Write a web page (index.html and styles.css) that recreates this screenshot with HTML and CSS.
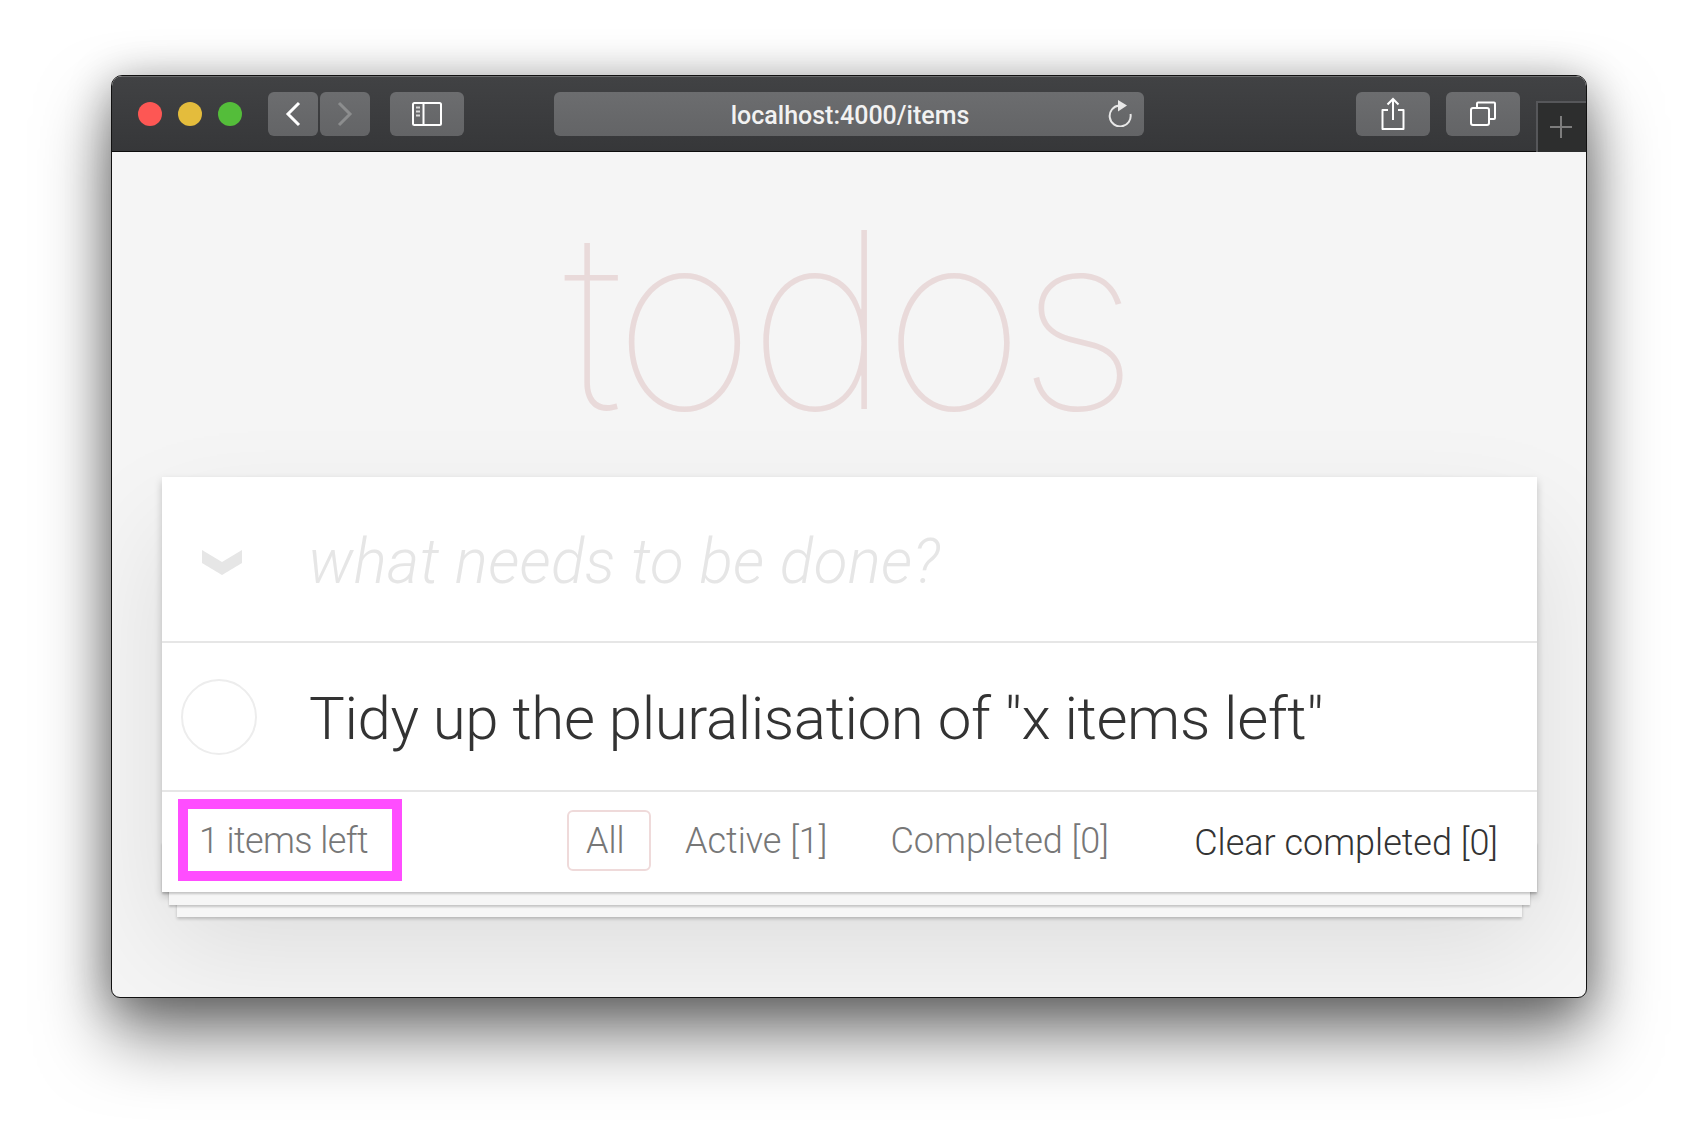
FILE: index.html
```html
<!DOCTYPE html>
<html lang="en">
<head>
<meta charset="utf-8">
<title>todos</title>
<link rel="stylesheet" href="styles.css">
</head>
<body>
<div class="window">
  <header class="toolbar">
    <div class="lights"><span class="light red"></span><span class="light yellow"></span><span class="light green"></span></div>
    <div class="nav">
      <button class="btn nav-btn"><svg width="16" height="26" viewBox="0 0 16 26"><path d="M14 2 3 13l11 11" fill="none" stroke="#fff" stroke-width="3"/></svg></button>
      <button class="btn nav-btn"><svg width="16" height="26" viewBox="0 0 16 26"><path d="M2 2l11 11L2 24" fill="none" stroke="#8c8d8e" stroke-width="3"/></svg></button>
    </div>
    <button class="btn side-btn"><svg width="32" height="26" viewBox="0 0 32 26"><rect x="2" y="2" width="28" height="22" rx="1.500" fill="none" stroke="#fff" stroke-width="2"/><path d="M12.500 2v22" stroke="#fff" stroke-width="2"/><path d="M5 6.500h4M5 10.500h4M5 14.500h4" stroke="#d8d8d8" stroke-width="2"/></svg></button>
    <div class="url">
      <span class="url-text">localhost:4000/items</span>
      <svg class="reload" width="26" height="28" viewBox="0 0 26 28"><path d="M11 6.500A10.500 10.500 0 1 0 22.500 15" fill="none" stroke="#e8e8e8" stroke-width="2"/><path d="M10 1v11.500L19 6.500z" fill="#e8e8e8"/></svg>
    </div>
    <button class="btn act-btn share"><svg width="26" height="34" viewBox="0 0 26 34"><path d="M8 13H2.500v19h21V13H18" fill="none" stroke="#fff" stroke-width="2" stroke-linejoin="round"/><path d="M13 23V2M7.500 7.500 13 2l5.500 5.500" fill="none" stroke="#fff" stroke-width="2"/></svg></button>
    <button class="btn act-btn tabs"><svg width="28" height="26" viewBox="0 0 28 26"><rect x="2" y="7" width="18" height="17" rx="2" fill="none" stroke="#fff" stroke-width="2"/><path d="M8 7V2.500a1 1 0 0 1 1-1h16a1 1 0 0 1 1 1V17a1 1 0 0 1-1 1h-5" fill="none" stroke="#fff" stroke-width="2"/></svg></button>
    <div class="newtab"><svg class="plus" width="22" height="22" viewBox="0 0 22 22"><path d="M11 0v22M0 11h22" stroke="#7d7d7d" stroke-width="2"/></svg></div>
  </header>
  <main class="content">
    <h1 class="title">todos</h1>
    <section class="card">
      <div class="row new-row">
        <svg class="toggle-all" width="40" height="25" viewBox="0 0 40 25"><path d="M0 0 20 12 40 0v13L20 25 0 13z" fill="#e6e6e6"/></svg>
        <span class="placeholder">what needs to be done?</span>
      </div>
      <div class="row item-row">
        <span class="check"></span>
        <span class="item-text">Tidy up the pluralisation of "x items left"</span>
      </div>
      <footer class="footer">
        <span class="count">1 items left</span>
        <nav class="filters">
          <a class="filter selected">All</a>
          <a class="filter active">Active [1]</a>
          <a class="filter completed">Completed [0]</a>
        </nav>
        <span class="clear">Clear completed [0]</span>
      </footer>
    </section>
  </main>
</div>
</body>
</html>
```
FILE: styles.css
```css
* { box-sizing: border-box; }
html, body { margin: 0; height: 100%; background: #fff; overflow: hidden; }
body { padding: 75px 111px 148px; font-family: Roboto, "Liberation Sans", sans-serif; }
.window {
  height: 923px;
  display: flex;
  flex-direction: column;
  border: 1px solid #111;
  border-radius: 11px 11px 9px 9px;
  background: #f5f5f5;
  overflow: hidden;
  box-shadow: 0 38px 70px rgba(0,0,0,.5), 0 6px 44px rgba(0,0,0,.32);
}
.toolbar {
  height: 76px;
  flex: none;
  display: flex;
  align-items: flex-start;
  padding: 15px 0 0 26px;
  background: linear-gradient(#414244, #363739);
  border-top: 1px solid #6b6c6d;
  border-bottom: 1px solid #0c0c0c;
}
.lights { display: flex; gap: 16px; margin-top: 10px; }
.light { width: 24px; height: 24px; border-radius: 50%; }
.red { background: #fd5754; }
.yellow { background: #e4bc3c; }
.green { background: #54bd3a; }
.btn {
  padding: 0;
  border: 0;
  height: 44px;
  border-radius: 6px;
  background: linear-gradient(#6c6d6f, #636466);
  display: flex;
  align-items: center;
  justify-content: center;
}
.nav { display: flex; gap: 2px; margin-left: 26px; }
.nav-btn { width: 50px; }
.side-btn { width: 74px; margin-left: 20px; }
.url {
  position: relative;
  width: 590px;
  height: 44px;
  margin-left: 90px;
  border-radius: 6px;
  background: linear-gradient(#6c6d6f, #636466);
  display: flex;
  align-items: center;
  justify-content: center;
}
.url-text { color: #f2f2f2; font-size: 25px; font-weight: 500; margin-left: 2px; margin-top: 2px; }
.reload { position: absolute; right: 10px; top: 7px; }
.act-btn { width: 74px; }
.share { margin-left: 212px; }
.tabs { margin-left: 16px; }
.newtab {
  width: 50px;
  height: 51px;
  margin: 9px 0 0 16px;
  background: #2d2e2e;
  border-left: 2px solid #56575a;
  border-top: 2px solid #56575a;
  display: flex;
  align-items: center;
  justify-content: center;
}
.plus { margin-right: 2px; margin-bottom: 2px; }
.content { flex: 1; padding: 0 49px 0 50px; }
.title {
  margin: 0;
  height: 325px;
  padding-right: 5px;
  text-align: center;
  font-size: 246px;
  line-height: 336px;
  font-weight: 130;
  color: #e9dada;
  letter-spacing: -8px;
  font-family: Inter, sans-serif;
}
.card {
  position: relative;
  isolation: isolate;
  background: #fff;
  box-shadow: 0 4px 8px rgba(0,0,0,.2), 0 54px 108px rgba(0,0,0,.1);
}
.row { display: flex; align-items: center; border-bottom: 2px solid #e6e6e6; }
.new-row { height: 166px; }
.item-row { height: 149px; }
.toggle-all { margin-left: 40px; margin-top: 6px; }
.placeholder {
  margin-left: 66px;
  margin-top: 4px;
  font-size: 62px;
  letter-spacing: .35px;
  font-weight: 300;
  font-style: italic;
  color: #e6e6e6;
}
.check {
  width: 76px;
  height: 76px;
  margin-left: 19px;
  border: 2px solid #ededed;
  border-radius: 50%;
}
.item-text {
  margin-left: 52px;
  margin-top: 4px;
  font-size: 60px;
  letter-spacing: -.4px;
  font-weight: 300;
  color: #333;
}
.footer {
  position: relative;
  height: 100px;
  display: flex;
  align-items: center;
  font-size: 36px;
  font-weight: 300;
  color: #777;
}
.footer::before {
  content: "";
  position: absolute;
  left: 0; right: 0; bottom: 0; height: 50px;
  z-index: -1;
  box-shadow: 0 2px 2px rgba(0,0,0,.2), 0 20px 0 -7px #f6f6f6, 0 22px 2px -7px rgba(0,0,0,.2), 0 40px 0 -15px #f6f6f6, 0 42px 3px -15px rgba(0,0,0,.2);
}
.count {
  width: 224px;
  height: 82px;
  margin: -4px 0 0 16px;
  padding: 2px 0 0 11px;
  border: 10px solid #ff4dff;
  display: flex;
  align-items: center;
  letter-spacing: -.6px;
}
.filters { display: flex; margin-left: 165px; margin-top: -4px; }
.filter {
  height: 61px;
  padding: 2px 17px 0;
  border: 2px solid transparent;
  border-radius: 6px;
  display: flex;
  align-items: center;
}
.selected { width: 84px; border-color: #efdada; }
.active { margin-left: 15px; }
.completed { margin-left: 25px; }
.clear { margin-left: auto; padding: 2px 39px 0 0; color: #333; }
```
